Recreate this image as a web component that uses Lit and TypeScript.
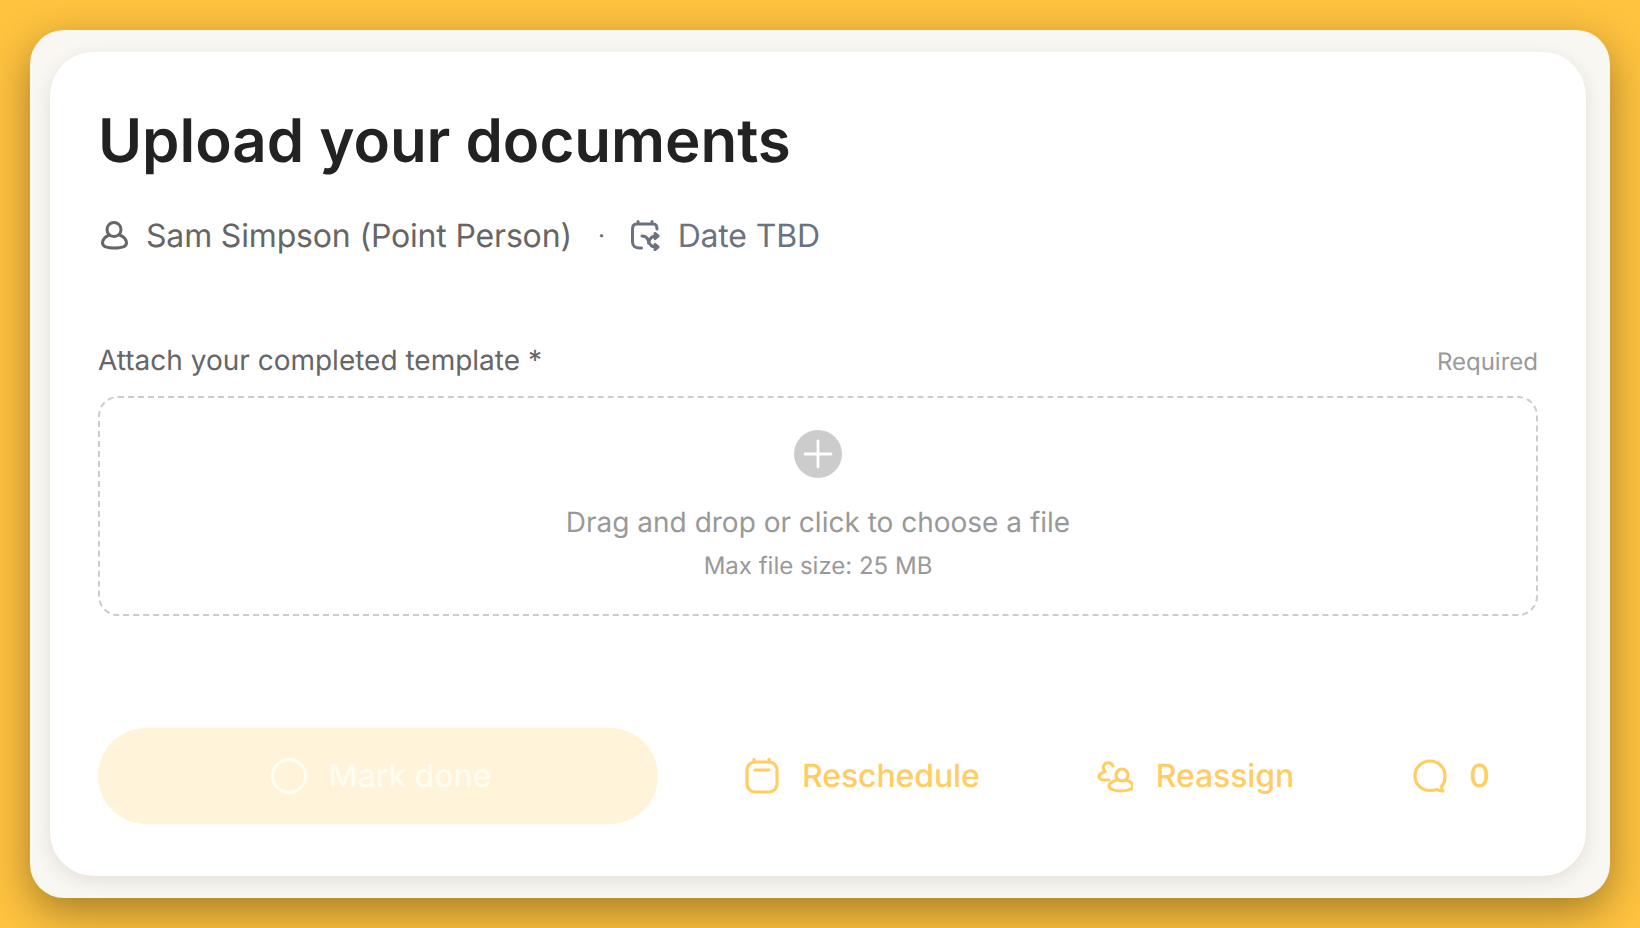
import { LitElement, html, css } from "lit";
import { customElement } from "lit/decorators.js";

@customElement("app-root")
export class AppRoot extends LitElement {
  static styles = css`
    :host { display: block; width: 1640px; height: 928px; overflow: hidden; font-family: Inter, "Liberation Sans", sans-serif; text-rendering: geometricPrecision; }
    .page { box-sizing: border-box; width: 1640px; height: 928px; padding: 30px; background: #ffc33f; }
    .tray { box-sizing: border-box; height: 868px; border-radius: 34px; background: #f9f7f2; padding: 22px 24px 22px 20px; box-shadow: 0 14px 44px rgba(0,0,0,.36); }
    .card { box-sizing: border-box; height: 824px; border-radius: 44px; background: #fff; padding: 53px 48px 52px 48px; display: flex; flex-direction: column; box-shadow: 0 5px 18px rgba(60,45,10,.11); }
    h1 { margin: 0; font-size: 60px; line-height: 72px; font-weight: 600; color: #222; letter-spacing: -0.03px; }
    .meta { display: flex; align-items: center; margin-top: 38px; height: 40px; font-size: 32px; color: #666; letter-spacing: -0.17px; }
    .meta svg { display: block; width: 32px; height: 32px; fill: none; stroke: currentColor; stroke-width: 3; stroke-linecap: round; stroke-linejoin: round; }
    .person { margin-left: 16px; }
    .dot { margin: 0 25px 0 26px; font-size: 24px; }
    .date { color: #6b7280; display: flex; align-items: center; gap: 16px; }
    .labels { display: flex; justify-content: space-between; align-items: flex-end; margin-top: 87px; }
    .label { font-size: 28px; line-height: 36px; color: #666; }
    .req { font-size: 24px; line-height: 32px; color: #999; }
    .drop { box-sizing: border-box; height: 220px; margin-top: 18px; border: 2px dashed #ccc; border-radius: 20px; display: flex; flex-direction: column; align-items: center; padding-top: 32px; color: #999; }
    .plus { display: block; width: 48px; height: 48px; }
    .drop-title { margin-top: 24px; font-size: 28px; line-height: 40px; }
    .drop-sub { margin-top: 8px; font-size: 24px; line-height: 32px; }
    .actions { display: flex; align-items: center; margin-top: auto; height: 96px; color: #ffcd62; font-size: 32px; font-weight: 500; letter-spacing: -0.1px; line-height: 38px; }
    .actions svg { display: block; width: 36px; height: 36px; fill: none; stroke: currentColor; stroke-width: 3.2; stroke-linecap: round; stroke-linejoin: round; }
    .done { box-sizing: border-box; width: 560px; height: 96px; padding-left: 6px; border-radius: 48px; background: #fff3d9; color: #fffcf0; display: flex; align-items: center; justify-content: center; gap: 22px; flex: none; }
    .act { display: flex; align-items: center; }
    .r1 { margin-left: 86px; gap: 22px; }
    .r2 { margin-left: 117px; gap: 23px; }
    .r3 { margin-left: 118px; gap: 21px; }
  `;

  render() {
    return html`<div class="page"><div class="tray"><div class="card">
      <h1>Upload your documents</h1>
      <div class="meta">
        <svg viewBox="0 0 32 32"><circle cx="16" cy="10.5" r="7"/><path d="M11.500 16C6.500 18 4.500 20.500 4.500 24c0 3 4 5 12 5s12-2 12-5c0-3.500-2-6-7-8"/></svg>
        <span class="person">Sam Simpson (Point Person)</span>
        <span class="dot">·</span>
        <span class="date">
          <svg viewBox="0 0 32 32"><path d="M8 2.500v2.500M22 2.500v2.500M6.500 5h17c2 0 3.500 1.500 3.500 5M2.500 23V10c0-3 1.500-5 4-5M2.500 23c0 4 3 6 7 6h2"/><path d="M12 17c3 0 5 1 6 4s3 7 7 7h3M18.500 24c1-4 3-7 7-7h2.500M25 14.500l3 2.500-3 2.500M25 25.500l3 2.500-3 2.500"/></svg>
          Date TBD
        </span>
      </div>
      <div class="labels"><span class="label">Attach your completed template *</span><span class="req">Required</span></div>
      <div class="drop">
        <svg class="plus" viewBox="0 0 48 48"><circle cx="24" cy="24" r="24" fill="#ccc"/><path d="M11 24h26M24 11v26" stroke="#fff" stroke-width="2.800" stroke-linecap="round"/></svg>
        <div class="drop-title">Drag and drop or click to choose a file</div>
        <div class="drop-sub">Max file size: 25 MB</div>
      </div>
      <div class="actions">
        <div class="done"><svg viewBox="0 0 36 36"><circle cx="18" cy="18" r="16.500"/></svg>Mark done</div>
        <div class="act r1"><svg viewBox="0 0 36 36"><rect x="3" y="4" width="30" height="30" rx="8"/><path d="M10 1.500v2.500M25 1.500v2.500M11 12h14"/></svg>Reschedule</div>
        <div class="act r2"><svg viewBox="0 0 36 36"><circle cx="25" cy="17" r="6"/><path d="M20 22c-5 1.500-8 3-8 6 0 3 5 5 12 5s12-2 12-5c0-3-3-4.500-7-6"/><path d="M16 8a5 5 0 1 0-8 5.500C4 15 2 16 2 18.500 2 21 5 22 7 22h5"/></svg>Reassign</div>
        <div class="act r3"><svg viewBox="0 0 36 36"><path d="M18 3C9.500 3 3 9.500 3 18s6.500 14.500 15 14.500c3 0 5-.500 7-1 1.500 1 4 1.500 6 1.500-1-1-1.500-3-1.500-4.500C32 26 33 22 33 18c0-8.500-6.500-15-15-15Z"/></svg>0</div>
      </div>
    </div></div></div>`;
  }
}
